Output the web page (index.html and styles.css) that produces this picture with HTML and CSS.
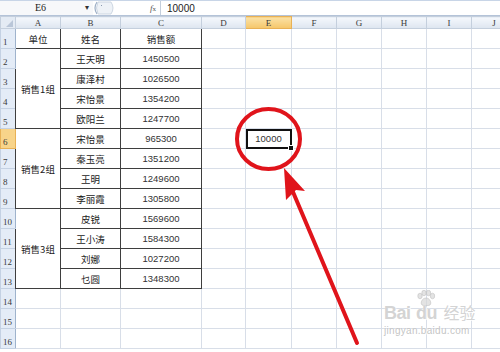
FILE: index.html
```html
<!doctype html>
<html lang="zh-CN">
<head>
    <meta charset="UTF-8">
    <meta name="viewport" content="width=device-width, initial-scale=1.0">
    <title>销售额 - 单元格选择</title>
    <link rel="stylesheet" href="styles.css">
</head>
<body>
    <div class="app">
        <div class="formula-bar">
            <div class="name-box">E6</div>
            <div class="name-drop">&#9662;</div>
            <svg class="grip" width="22" height="14" viewBox="0 0 22 14">
                <path d="M4 1 Q0 7 4 13" fill="none" stroke="#9fb0c7" stroke-width="1.2"/>
                <path d="M5 1 H18 Q22 7 18 13 H5 Q2 7 5 1 Z" fill="#eef2f7" stroke="#c3cedc" stroke-width="0.8"/>
                <path d="M8 4 l1 1" stroke="#8a9ab0" stroke-width="1"/>
            </svg>
            <div class="fx"><i>f</i><span>x</span></div>
            <div class="formula">10000</div>
        </div>

        <div class="sheet">
            <table class="grid">
                <colgroup>
                    <col class="c-rh"><col class="c-a"><col class="c-b"><col class="c-c"><col class="c-d"><col class="c-e">
                    <col class="c-n"><col class="c-n"><col class="c-n"><col class="c-n"><col class="c-n">
                </colgroup>
                <tr class="head">
                    <th class="corner"><span class="tri"></span></th>
                    <th>A</th><th>B</th><th>C</th><th>D</th><th class="sel">E</th>
                    <th>F</th><th>G</th><th>H</th><th>I</th><th>J</th>
                </tr>
                <tr>
                    <th class="rh">1</th>
                    <td class="d">单位</td><td class="d">姓名</td><td class="d">销售额</td>
                    <td></td><td></td><td></td><td></td><td></td><td></td><td></td>
                </tr>
                <tr>
                    <th class="rh">2</th>
                    <td class="d" rowspan="4">销售1组</td><td class="d">王天明</td><td class="d num">1450500</td>
                    <td></td><td></td><td></td><td></td><td></td><td></td><td></td>
                </tr>
                <tr>
                    <th class="rh">3</th>
                    <td class="d">康泽村</td><td class="d num">1026500</td>
                    <td></td><td></td><td></td><td></td><td></td><td></td><td></td>
                </tr>
                <tr>
                    <th class="rh">4</th>
                    <td class="d">宋怡景</td><td class="d num">1354200</td>
                    <td></td><td></td><td></td><td></td><td></td><td></td><td></td>
                </tr>
                <tr>
                    <th class="rh">5</th>
                    <td class="d">欧阳兰</td><td class="d num">1247700</td>
                    <td></td><td></td><td></td><td></td><td></td><td></td><td></td>
                </tr>
                <tr>
                    <th class="rh sel">6</th>
                    <td class="d" rowspan="4">销售2组</td><td class="d">宋怡景</td><td class="d num">965300</td>
                    <td></td><td class="active num">10000</td><td></td><td></td><td></td><td></td><td></td>
                </tr>
                <tr>
                    <th class="rh">7</th>
                    <td class="d">秦玉亮</td><td class="d num">1351200</td>
                    <td></td><td></td><td></td><td></td><td></td><td></td><td></td>
                </tr>
                <tr>
                    <th class="rh">8</th>
                    <td class="d">王明</td><td class="d num">1249600</td>
                    <td></td><td></td><td></td><td></td><td></td><td></td><td></td>
                </tr>
                <tr>
                    <th class="rh">9</th>
                    <td class="d">李丽霞</td><td class="d num">1305800</td>
                    <td></td><td></td><td></td><td></td><td></td><td></td><td></td>
                </tr>
                <tr>
                    <th class="rh">10</th>
                    <td class="d" rowspan="4">销售3组</td><td class="d">皮锐</td><td class="d num">1569600</td>
                    <td></td><td></td><td></td><td></td><td></td><td></td><td></td>
                </tr>
                <tr>
                    <th class="rh">11</th>
                    <td class="d">王小涛</td><td class="d num">1584300</td>
                    <td></td><td></td><td></td><td></td><td></td><td></td><td></td>
                </tr>
                <tr>
                    <th class="rh">12</th>
                    <td class="d">刘娜</td><td class="d num">1027200</td>
                    <td></td><td></td><td></td><td></td><td></td><td></td><td></td>
                </tr>
                <tr>
                    <th class="rh">13</th>
                    <td class="d">乜圆</td><td class="d num">1348300</td>
                    <td></td><td></td><td></td><td></td><td></td><td></td><td></td>
                </tr>
                <tr>
                    <th class="rh">14</th>
                    <td></td><td></td><td></td><td></td><td></td><td></td><td></td><td></td><td></td><td></td>
                </tr>
                <tr>
                    <th class="rh">15</th>
                    <td></td><td></td><td></td><td></td><td></td><td></td><td></td><td></td><td></td><td></td>
                </tr>
                <tr>
                    <th class="rh">16</th>
                    <td></td><td></td><td></td><td></td><td></td><td></td><td></td><td></td><td></td><td></td>
                </tr>
            </table>

            <!-- red annotation drawn over the sheet -->
            <svg class="mark" width="500" height="352" viewBox="0 0 500 352">
                <ellipse cx="268.5" cy="139" rx="31.5" ry="30" fill="none" stroke="#e0141b" stroke-width="4"/>
                <line x1="357" y1="343" x2="293" y2="192" stroke="#e0141b" stroke-width="4" stroke-linecap="round"/>
                <polygon points="284,168 305,191 296,190 286,200" fill="#e0141b"/>
            </svg>

            <div class="watermark">
                <span class="wm-word">Bai</span>
                <span class="wm-du">
                    <svg class="paw" width="20" height="16" viewBox="0 0 20 16">
                        <g fill="rgba(215,215,215,0.7)" stroke="rgba(190,190,190,0.7)" stroke-width="0.8">
                            <ellipse cx="4" cy="6" rx="2.2" ry="2.8"/>
                            <ellipse cx="8" cy="3" rx="2.2" ry="2.8"/>
                            <ellipse cx="12.5" cy="3" rx="2.2" ry="2.8"/>
                            <ellipse cx="16.5" cy="6" rx="2.2" ry="2.8"/>
                            <path d="M10 8 C6 8 4 13 6 15 C8 16 12 16 14 15 C16 13 14 8 10 8 Z"/>
                        </g>
                    </svg>
                    <span class="wm-word">du</span>
                </span>
                <span class="wm-cn">经验</span>
                <div class="wm-url">jingyan.baidu.com</div>
            </div>
        </div>
    </div>
</body>
</html>
```

FILE: styles.css
```css
body {
    margin: 0;
    background: #fff;
    font-family: "Noto Sans CJK SC", sans-serif;
    overflow: hidden;
}
.app {
    width: 500px;
    height: 352px;
    overflow: hidden;
}

/* formula bar */
.formula-bar {
    display: flex;
    align-items: center;
    height: 14px;
    border-top: 1px solid #c8d5e7;
    border-bottom: 1px solid #b4c3d8;
    background: #fff;
    font-family: "Liberation Serif", serif;
    font-size: 10px;
    color: #222;
}
.name-box {
    width: 81px;
    text-align: center;
    background: #f7f8fa;
    height: 14px;
    line-height: 14px;
}
.name-drop {
    width: 12px;
    font-size: 8px;
    color: #333;
    text-align: center;
    background: #f7f8fa;
    height: 14px;
    line-height: 14px;
}
.fx {
    width: 46px;
    text-align: right;
    padding-right: 4px;
    color: #555;
    font-size: 9px;
    border-right: 1px solid #c3cedc;
    height: 14px;
    line-height: 14px;
    box-sizing: border-box;
}
.fx span {
    font-size: 7px;
}
.formula {
    padding-left: 6px;
    font-family: "Liberation Sans", sans-serif;
    font-size: 10px;
}

/* sheet */
.sheet {
    position: relative;
    width: 500px;
    height: 336px;
    overflow: hidden;
}
.grid {
    border-collapse: collapse;
    table-layout: fixed;
    width: 516px;
}
.c-rh { width: 15px; }
.c-a { width: 45px; }
.c-b { width: 60px; }
.c-c { width: 81px; }
.c-d { width: 44px; }
.c-e { width: 46px; }
.c-n { width: 45px; }

.grid tr {
    height: 20px;
}
.grid tr.head {
    height: 12px;
}
.grid td {
    padding: 0;
    border: 1px solid #d8dee8;
    text-align: center;
    vertical-align: middle;
    font-size: 9.5px;
    color: #222;
    white-space: nowrap;
}
.grid th {
    padding: 0;
    font-family: "Liberation Serif", serif;
    font-weight: normal;
    font-size: 9px;
    color: #3a3a3a;
    border: 1px solid #c4cfdd;
    background: linear-gradient(#f5f8fc, #dde5f0);
    line-height: 10px;
}
.grid th.corner {
    position: relative;
    background: #e4ebf4;
}
.tri {
    position: absolute;
    right: 2px;
    bottom: 1px;
    width: 0;
    height: 0;
    border-left: 7px solid transparent;
    border-bottom: 7px solid #b9c6d8;
}
.grid th.rh {
    background: #e4ecf7;
    text-align: left;
    vertical-align: bottom;
    padding-left: 2px;
    padding-bottom: 1px;
    border-color: #c4d1e3;
    border-right-color: #9fb3cc;
}
.grid th.sel {
    background: linear-gradient(#fbe2a6, #f5c66a);
    border-color: #e8b156;
}
.grid th.rh.sel {
    background: #f8d48a;
}

/* data table */
.grid td.d {
    border: 1px solid #3e3e3e;
}
.grid td.num {
    font-family: "Liberation Sans", sans-serif;
    font-size: 9.5px;
    color: #333;
}
.grid td.active {
    position: relative;
    outline: 2px solid #111;
    outline-offset: -2px;
}
.grid td.active::after {
    content: "";
    position: absolute;
    right: -3px;
    bottom: -3px;
    width: 4px;
    height: 4px;
    background: #111;
    border: 1px solid #fff;
}

/* annotation */
.mark {
    position: absolute;
    left: 0;
    top: -16px;
    pointer-events: none;
}

/* watermark */
.watermark {
    position: absolute;
    left: 384px;
    top: 274px;
    width: 100px;
    color: rgba(200, 200, 200, 0.8);
    text-shadow: 0 0 1px #fff, 1px 1px 0 rgba(255, 255, 255, 0.8);
    font-family: "Liberation Sans", sans-serif;
    line-height: 1;
}
.wm-word {
    font-size: 18px;
    font-weight: bold;
    letter-spacing: -0.5px;
}
.wm-du {
    display: inline-flex;
    flex-direction: column;
    align-items: center;
    vertical-align: bottom;
    margin-left: 1px;
}
.wm-du .wm-word {
    margin-top: -2px;
}
.paw {
    display: block;
}
.wm-cn {
    font-family: "Noto Sans CJK SC", sans-serif;
    font-size: 16px;
    margin-left: 2px;
}
.wm-url {
    font-size: 10px;
    margin-top: 4px;
    letter-spacing: 0.3px;
    color: rgba(185, 185, 185, 0.85);
}
```
